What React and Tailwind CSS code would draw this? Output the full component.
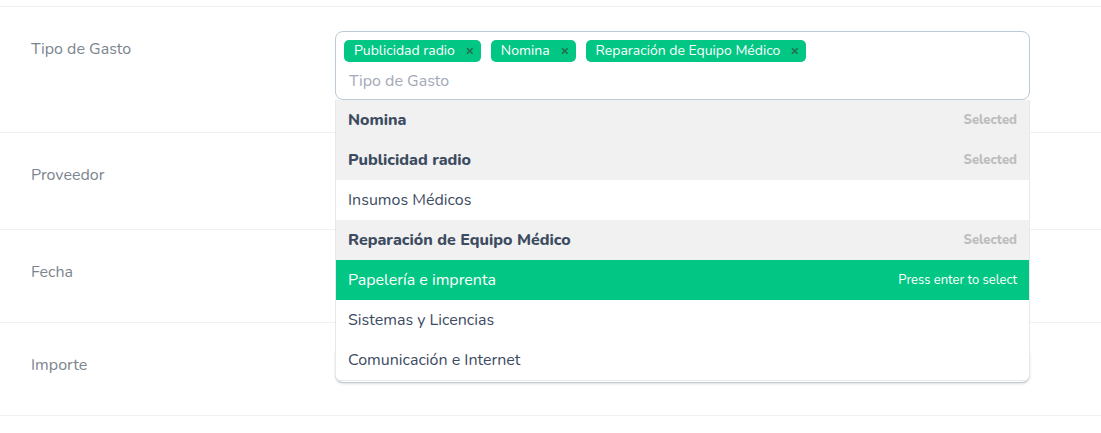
import { useState } from "react";

const OPTIONS = [
  "Nomina",
  "Publicidad radio",
  "Insumos Médicos",
  "Reparación de Equipo Médico",
  "Papelería e imprenta",
  "Sistemas y Licencias",
  "Comunicación e Internet",
];

const FIELD =
  "block w-full rounded-lg border border-[#bacad6] bg-white px-3 text-base text-[#35495e] outline-none";

function Row({ id, label, children }) {
  return (
    <div className="flex border-b border-[#eef1f4] pr-[71px] pl-[31px]">
      <div className="w-[304px] shrink-0 pt-8">
        <label htmlFor={id} className="block text-base leading-5 text-[#7c858e]">
          {label}
        </label>
      </div>
      <div className="min-w-0 flex-1 pt-6 pb-8">{children}</div>
    </div>
  );
}

function Tag({ name, onRemove }) {
  return (
    <span className="flex h-[22px] items-center rounded-[5px] bg-[#02c684] pl-[10px] text-sm leading-4 whitespace-nowrap text-white">
      <span>{name}</span>
      <button
        type="button"
        aria-label={`Quitar ${name}`}
        onClick={onRemove}
        className="ml-1 flex h-[22px] w-[22px] items-center justify-center text-[#266d4d]"
      >
        <svg viewBox="0 0 8 8" className="h-2 w-2" fill="none" stroke="currentColor" strokeWidth="1.6">
          <path d="M1 1.2 6.6 6.8M6.6 1.2 1 6.8" />
        </svg>
      </button>
    </span>
  );
}

function Option({ name, selected, active, onPick, onHover }) {
  let tone = "bg-white text-[#3c4b5f]";
  let hint = "";
  let hintTone = "";
  if (active) {
    tone = "bg-[#02c684] text-white";
    hint = selected ? "Press enter to remove" : "Press enter to select";
    hintTone = "text-white";
  } else if (selected) {
    tone = "bg-[#f1f1f1] font-extrabold text-[#3c4b5f]";
    hint = "Selected";
    hintTone = "text-[#bdbdbd]";
  }
  return (
    <li
      role="option"
      aria-selected={selected}
      onClick={onPick}
      onMouseEnter={onHover}
      className={`flex h-10 cursor-pointer items-center justify-between px-3 text-base leading-4 ${tone}`}
    >
      <span>{name}</span>
      <span className={`text-[13px] ${hintTone}`}>{hint}</span>
    </li>
  );
}

function MultiSelect({ id, placeholder }) {
  const [picked, setPicked] = useState(["Publicidad radio", "Nomina", "Reparación de Equipo Médico"]);
  const [active, setActive] = useState("Papelería e imprenta");
  const toggle = (name) =>
    setPicked((list) => (list.includes(name) ? list.filter((n) => n !== name) : [...list, name]));

  return (
    <div className="relative">
      <div className="rounded-lg border border-[#bacad6] bg-white p-2">
        <div className="flex flex-wrap gap-x-[10px] gap-y-1">
          {picked.map((name) => (
            <Tag key={name} name={name} onRemove={() => toggle(name)} />
          ))}
        </div>
        <input
          id={id}
          type="text"
          role="combobox"
          aria-expanded="true"
          aria-controls={`${id}-list`}
          placeholder={placeholder}
          onKeyDown={(e) => e.key === "Enter" && toggle(active)}
          className="mt-[9px] block h-5 w-full bg-transparent pl-[5px] text-base leading-5 text-[#35495e] outline-none placeholder:text-[#a3a9b8]"
        />
      </div>
      <ul
        id={`${id}-list`}
        role="listbox"
        aria-multiselectable="true"
        className="absolute inset-x-0 top-full z-10 overflow-hidden rounded-b-md border border-t-0 border-[#e8e8e8] bg-white"
      >
        {OPTIONS.map((name) => (
          <Option
            key={name}
            name={name}
            selected={picked.includes(name)}
            active={name === active}
            onPick={() => toggle(name)}
            onHover={() => setActive(name)}
          />
        ))}
      </ul>
    </div>
  );
}

export default function App() {
  return (
    <main className="min-h-screen bg-white font-['Nunito','Lato',sans-serif]">
      <div className="h-[7px] border-b border-[#eef1f4]" />
      <Row id="tipo" label="Tipo de Gasto">
        <MultiSelect id="tipo" placeholder="Tipo de Gasto" />
      </Row>
      <Row id="proveedor" label="Proveedor">
        <input id="proveedor" type="text" className={`${FIELD} h-10`} />
      </Row>
      <Row id="fecha" label="Fecha">
        <input id="fecha" type="text" className={`${FIELD} h-9`} />
      </Row>
      <Row id="importe" label="Importe">
        <input id="importe" type="text" className={`${FIELD} h-9 shadow-sm`} />
      </Row>
    </main>
  );
}
